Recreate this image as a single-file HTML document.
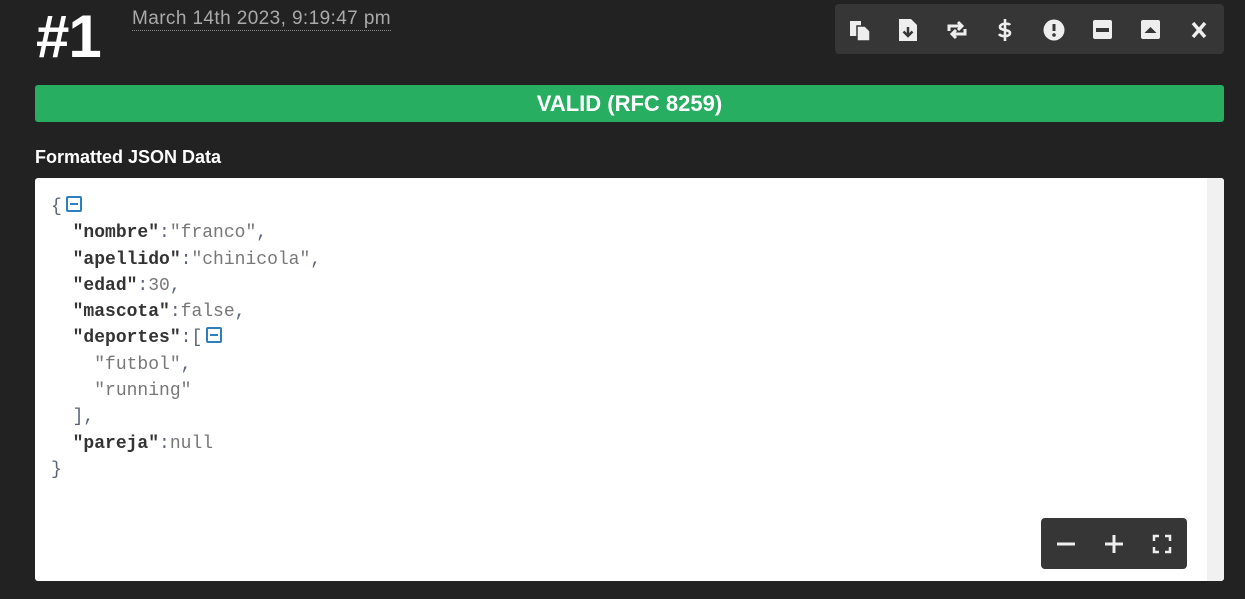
<!DOCTYPE html>
<html><head><meta charset="utf-8"><style>
body{margin:0;background:#222;width:1245px;height:599px;overflow:hidden;font-family:"Liberation Sans",sans-serif;position:relative}
.h1{position:absolute;left:36px;top:2px;font-size:60px;font-weight:bold;color:#fff;letter-spacing:-1px}
.date{position:absolute;left:132px;top:8px;font-size:19px;color:#aaa;border-bottom:1px dotted #888;line-height:22px;letter-spacing:0.4px}
.tb{position:absolute;left:835px;top:4px;width:389px;height:50px;background:#363636;border-radius:4px}
.tb svg{position:absolute;top:14px}
.valid{position:absolute;left:35px;top:85px;width:1189px;height:37px;background:#27ae60;border-radius:3px;color:#fff;font-weight:bold;font-size:22px;text-align:center;line-height:37px}
.lbl{position:absolute;left:35px;top:147px;color:#fff;font-weight:bold;font-size:18px}
.ed{position:absolute;left:35px;top:178px;width:1189px;height:403px;background:#fff;border-radius:3px;overflow:hidden}
.sb{position:absolute;right:0;top:0;width:17px;height:403px;background:#f1f1f1}
pre{margin:0;position:absolute;left:16px;top:16px;font-family:"Liberation Mono",monospace;font-size:18px;line-height:26.3px;color:#5a6478}
b{color:#333}
.s{color:#777}
.c{display:inline-block;width:16px;height:16px;border:2px solid #2d7fc0;box-sizing:border-box;border-radius:2px;vertical-align:-1px;position:relative;margin-left:4px}
.c:after{content:"";position:absolute;left:2px;right:2px;top:5px;height:2px;background:#2d7fc0}
.zm{position:absolute;left:1041px;top:518px;width:146px;height:51px;background:#363636;border-radius:4px}
</style></head><body>
<div class="h1">#1</div>
<div class="date">March 14th 2023, 9:19:47 pm</div>
<div class="tb">
<svg style="left:14px" width="22" height="24" viewBox="0 0 22 24"><path d="M1 2h6v4h4V2h-2v0" fill="none"/><rect x="1" y="3" width="11" height="15" fill="#eee"/><path d="M8 8h8l5 5v10H8z" fill="#eee" stroke="#363636" stroke-width="1.5"/></svg>
<svg style="left:63px" width="20" height="24" viewBox="0 0 20 24"><path d="M1 1h12l6 6v16H1z" fill="#eee"/><path d="M10 9v9M5.5 13.5l4.5 4.5 4.5-4.5" stroke="#363636" stroke-width="2.5" fill="none"/></svg>
<svg style="left:111px" width="22" height="24" viewBox="0 0 22 24"><path d="M3 13V8h12M12 4l4 4-4 4M19 11v5H7M10 20l-4-4 4-4" stroke="#eee" stroke-width="3" fill="none"/></svg>
<svg style="left:162px" width="16" height="24" viewBox="0 0 16 24"><path d="M13 7c-1-2-10-2-10 2s10 2 10 6-9 4-11 1M8 1v22" stroke="#eee" stroke-width="2.6" fill="none"/></svg>
<svg style="left:208px" width="22" height="24" viewBox="0 0 22 24"><circle cx="11" cy="12" r="10.5" fill="#eee"/><path d="M11 6v7" stroke="#363636" stroke-width="3"/><circle cx="11" cy="17" r="1.8" fill="#363636"/></svg>
<svg style="left:257px" width="22" height="24" viewBox="0 0 22 24"><rect x="1" y="2" width="19" height="19" rx="2" fill="#eee"/><rect x="4" y="10" width="13" height="4" fill="#363636"/></svg>
<svg style="left:305px" width="22" height="24" viewBox="0 0 22 24"><rect x="1" y="2" width="19" height="19" rx="2" fill="#eee"/><path d="M4.5 15l6-6 6 6z" fill="#363636"/></svg>
<svg style="left:355px" width="18" height="24" viewBox="0 0 18 24"><path d="M3 5l12 14M15 5L3 19" stroke="#eee" stroke-width="3.5"/></svg>
</div>
<div class="valid">VALID (RFC 8259)</div>
<div class="lbl">Formatted JSON Data</div>
<div class="ed"><div class="sb"></div>
<pre>{<span class="c"></span>
  <b>"nombre"</b>:<span class="s">"franco"</span>,
  <b>"apellido"</b>:<span class="s">"chinicola"</span>,
  <b>"edad"</b>:<span class="s">30</span>,
  <b>"mascota"</b>:<span class="s">false</span>,
  <b>"deportes"</b>:[<span class="c"></span>
    <span class="s">"futbol"</span>,
    <span class="s">"running"</span>
  ],
  <b>"pareja"</b>:<span class="s">null</span>
}</pre>
</div>
<div class="zm">
<svg style="position:absolute;left:15px;top:16px" width="20" height="20"><path d="M1 10h18" stroke="#eee" stroke-width="3"/></svg>
<svg style="position:absolute;left:63px;top:16px" width="20" height="20"><path d="M1 10h18M10 1v18" stroke="#eee" stroke-width="3"/></svg>
<svg style="position:absolute;left:111px;top:16px" width="20" height="20"><path d="M2 7V2h5M13 2h5v5M18 13v5h-5M7 18H2v-5" stroke="#eee" stroke-width="2.5" fill="none"/></svg>
</div>
</body></html>
